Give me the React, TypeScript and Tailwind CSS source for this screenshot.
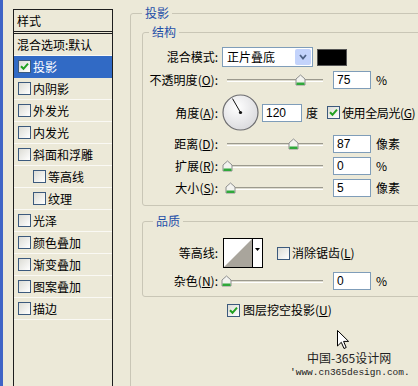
import React from "react";

// Photoshop 图层样式 dialog, drop-shadow page

type Item = { label: string; checked?: boolean; selected?: boolean; indent?: boolean };

const items: Item[] = [
  { label: "投影", checked: true, selected: true },
  { label: "内阴影" },
  { label: "外发光" },
  { label: "内发光" },
  { label: "斜面和浮雕" },
  { label: "等高线", indent: true },
  { label: "纹理", indent: true },
  { label: "光泽" },
  { label: "颜色叠加" },
  { label: "渐变叠加" },
  { label: "图案叠加" },
  { label: "描边" },
];

function Check({ checked = false }: { checked?: boolean }) {
  return (
    <span className="flex h-[13px] w-[13px] shrink-0 items-center justify-center border border-[#3c5a7d] bg-linear-to-br from-[#dcdcd5] to-white">
      {checked && (
        <svg width="9" height="9" viewBox="0 0 9 9">
          <path d="M1 4.2 L3.5 6.8 L8 1.6" stroke="#21a121" strokeWidth="2" fill="none" />
        </svg>
      )}
    </span>
  );
}

function Label({ text, k }: { text: string; k?: string }) {
  return (
    <div className="w-[75px] shrink-0 text-right">
      {text}
      {k && (
        <>
          (<span className="underline">{k}</span>)
        </>
      )}
      :
    </div>
  );
}

function Thumb() {
  return (
    <svg width="11" height="12" viewBox="0 0 11 12">
      <path d="M1 11 L1 5 L5.5 1 L10 5 L10 11 Z" fill="#f3f3ef" stroke="#8e8f8f" />
      <rect x="1.5" y="8.5" width="8" height="2.5" fill="#2fa83a" />
    </svg>
  );
}

function Slider({ pos }: { pos: number }) {
  return (
    <div className="relative ml-[4px] h-full w-[106px] shrink-0">
      <div className="absolute left-[5px] right-[5px] top-[8px] h-[3px] border-t border-b border-t-[#9c9a8e] border-b-white bg-[#dedcd0]" />
      <div className="absolute top-[3px]" style={{ left: pos - 5 }}>
        <Thumb />
      </div>
    </div>
  );
}

function NumBox({ v }: { v: string }) {
  return (
    <div className="ml-[5px] flex h-[18px] w-[38px] shrink-0 items-center border border-[#7f9db9] bg-white pl-[3px] font-['Liberation_Sans',sans-serif] text-[12px]">
      {v}
    </div>
  );
}

function SliderRow({ text, k, pos, v, unit }: { text: string; k: string; pos: number; v: string; unit: string }) {
  return (
    <div className="mt-[4px] flex h-[18px] items-center">
      <Label text={text} k={k} />
      <Slider pos={pos} />
      <NumBox v={v} />
      <span className="ml-[5px]">{unit}</span>
    </div>
  );
}

function Dial() {
  return (
    <svg width="37" height="37" viewBox="0 0 37 37" className="ml-[4px] shrink-0">
      <defs>
        <radialGradient id="dg" cx="0.4" cy="0.35" r="0.7">
          <stop offset="0" stopColor="#ffffff" />
          <stop offset="1" stopColor="#d9d9dc" />
        </radialGradient>
      </defs>
      <circle cx="18.5" cy="18.5" r="17.5" fill="url(#dg)" stroke="#6d6d70" strokeWidth="1.2" />
      <line x1="18.5" y1="18.5" x2="10.5" y2="4.6" stroke="#111" strokeWidth="1" />
      <circle cx="18.5" cy="18.5" r="1.6" fill="#111" />
    </svg>
  );
}

export default function App() {
  return (
    <div className="relative flex h-[386px] w-[418px] overflow-hidden bg-[#ece9d8] font-['Noto_Sans_CJK_SC',sans-serif] text-[12px] leading-[14px] text-black">
      <div className="h-full w-[3px] shrink-0 bg-[#3f64c6]" />

      {/* style list */}
      <div className="ml-[10px] mt-[9px] h-[400px] w-[100px] shrink-0 border border-[#1e1e1e]">
        <div className="flex h-[24px] items-center border-b-[3px] border-double border-[#1e1e1e] pl-[3px]">样式</div>
        <div className="flex h-[22px] items-center border-b border-[#faf9f4] pl-[3px]">混合选项:默认</div>
        {items.map((it) => (
          <div
            key={it.label}
            className={
              "flex h-[22px] items-center gap-[2px] border-b " +
              (it.selected ? "border-[#316ac5] bg-[#316ac5] text-white " : "border-[#faf9f4] ") +
              (it.indent ? "pl-[19px]" : "pl-[4px]")
            }
          >
            <Check checked={it.checked} />
            <span>{it.label}</span>
          </div>
        ))}
      </div>

      {/* 投影 group */}
      <fieldset className="ml-[17px] mt-[6px] h-[420px] w-[300px] shrink-0 rounded-[3px] border border-[#c9c6b6] p-0">
        <legend className="ml-[11px] px-[3px] text-[#1f4fa8]">投影</legend>

        <fieldset className="ml-[11px] mt-[5px] w-[290px] rounded-[3px] border border-[#c9c6b6] p-0 pb-[8px]">
          <legend className="ml-[6px] px-[3px] text-[#1f4fa8]">结构</legend>

          <div className="mt-[8px] flex h-[20px] items-center">
            <Label text="混合模式" />
            <div className="ml-[4px] flex h-[20px] w-[91px] items-center justify-between border border-[#7f9db9] bg-white pl-[4px]">
              <span>正片叠底</span>
              <span className="m-px flex h-[16px] w-[16px] items-center justify-center rounded-[2px] bg-[#c3d3fb]">
                <svg width="8" height="6" viewBox="0 0 8 6">
                  <path d="M1 1 L4 4.5 L7 1" stroke="#4d6185" strokeWidth="1.8" fill="none" />
                </svg>
              </span>
            </div>
            <div className="ml-[4px] h-[17px] w-[30px] border border-[#555] bg-black" />
          </div>

          <SliderRow text="不透明度" k="O" pos={78} v="75" unit="%" />

          <div className="mt-[5px] flex h-[37px] items-center">
            <Label text="角度" k="A" />
            <Dial />
            <div className="ml-[3px] flex h-[18px] w-[40px] items-center border border-[#7f9db9] bg-white pl-[3px] font-['Liberation_Sans',sans-serif]">
              120
            </div>
            <span className="ml-[4px]">度</span>
            <span className="ml-[9px] flex items-center gap-[2px]">
              <Check checked />
              <span className="tracking-[-0.4px]">
                使用全局光(<span className="underline">G</span>)
              </span>
            </span>
          </div>

          <SliderRow text="距离" k="D" pos={71} v="87" unit="像素" />
          <SliderRow text="扩展" k="R" pos={5} v="0" unit="%" />
          <SliderRow text="大小" k="S" pos={8} v="5" unit="像素" />
        </fieldset>

        <fieldset className="ml-[11px] mt-[8px] w-[290px] rounded-[3px] border border-[#c9c6b6] p-0 pb-[6px]">
          <legend className="ml-[10px] px-[3px] text-[#1f4fa8]">品质</legend>

          <div className="mt-[10px] flex h-[30px] items-center">
            <Label text="等高线" />
            <div className="ml-[5px] flex h-[30px] w-[40px] border border-black bg-white">
              <svg width="28" height="28" viewBox="0 0 28 28" className="shrink-0">
                <polygon points="0,28 28,0 28,28" fill="#a9a59c" />
              </svg>
              <div className="flex flex-1 justify-center border-l border-black pt-[9px]">
                <svg width="5" height="3" viewBox="0 0 5 3">
                  <polygon points="0,0 5,0 2.5,3" fill="#000" />
                </svg>
              </div>
            </div>
            <span className="ml-[14px] flex items-center gap-[2px]">
              <Check />
              <span>
                消除锯齿(<span className="underline">L</span>)
              </span>
            </span>
          </div>

          <SliderRow text="杂色" k="N" pos={4} v="0" unit="%" />
        </fieldset>

        <div className="mt-[6px] flex h-[14px] items-center gap-[3px] pl-[96px]">
          <Check checked />
          <span>
            图层挖空投影(<span className="underline">U</span>)
          </span>
        </div>
      </fieldset>

      {/* mouse pointer over the dialog */}
      <svg width="13" height="20" viewBox="0 0 13 20" className="absolute left-[337px] top-[330px]">
        <path d="M0.5 0.5 L0.5 16 L4.3 12.3 L7 18.5 L9.2 17.5 L6.6 11.4 L11.6 11.4 Z" fill="#fff" stroke="#000" strokeWidth="1" />
      </svg>

      {/* watermark */}
      <div className="absolute left-[307px] top-[351px] text-[12px] text-[#222]">中国-365设计网</div>
      <div className="absolute left-[290px] top-[366px] font-['Liberation_Mono',monospace] text-[9.5px] text-[#222]">
        'www.cn365design.com.
      </div>
    </div>
  );
}
